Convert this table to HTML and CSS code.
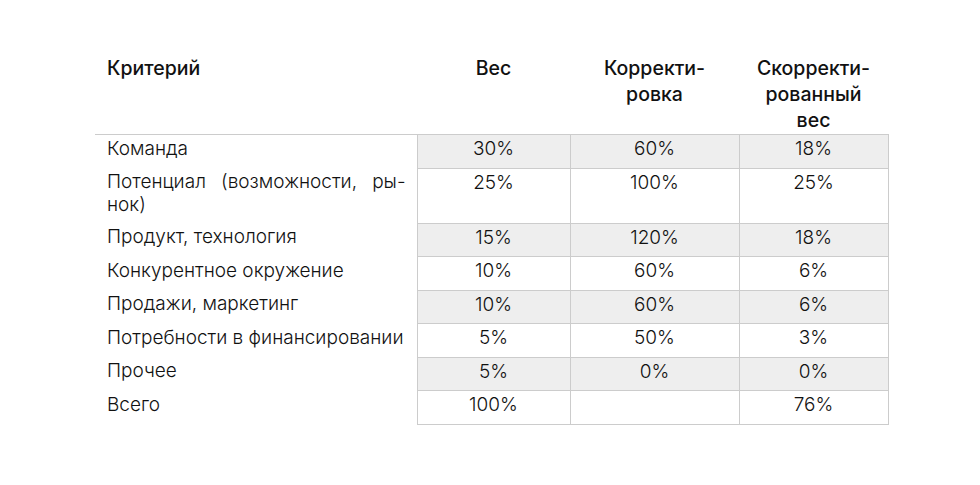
FILE: index.html
```html
<!DOCTYPE html>
<html lang="ru">
<head>
<meta charset="utf-8">
<link rel="stylesheet" href="styles.css">
</head>
<body>
<div class="page">
  <table class="weights">
    <colgroup>
      <col class="c1"><col class="c2"><col class="c3"><col class="c4">
    </colgroup>
    <thead>
      <tr>
        <th class="crit">Критерий</th>
        <th>Вес</th>
        <th>Корректи-<br>ровка</th>
        <th>Скорректи-<br>рованный<br>вес</th>
      </tr>
    </thead>
    <tbody>
      <tr class="shade"><td class="crit">Команда</td><td>30%</td><td>60%</td><td>18%</td></tr>
      <tr><td class="crit"><span class="just">Потенциал (возможности, ры-</span>нок)</td><td>25%</td><td>100%</td><td>25%</td></tr>
      <tr class="shade"><td class="crit">Продукт, технология</td><td>15%</td><td>120%</td><td>18%</td></tr>
      <tr><td class="crit">Конкурентное окружение</td><td>10%</td><td>60%</td><td>6%</td></tr>
      <tr class="shade"><td class="crit">Продажи, маркетинг</td><td>10%</td><td>60%</td><td>6%</td></tr>
      <tr><td class="crit">Потребности в финансировании</td><td>5%</td><td>50%</td><td>3%</td></tr>
      <tr class="shade"><td class="crit">Прочее</td><td>5%</td><td>0%</td><td>0%</td></tr>
      <tr><td class="crit">Всего</td><td>100%</td><td></td><td>76%</td></tr>
    </tbody>
  </table>
</div>
</body>
</html>
```
FILE: styles.css
```css
html, body {
  margin: 0;
  padding: 0;
  background: #ffffff;
}
.page {
  padding: 55px 0 0 95px;
  font-family: "Inter", "Liberation Sans", sans-serif;
  color: #111111;
}
.weights {
  border-collapse: collapse;
  table-layout: fixed;
  width: 793px;
}
.c1 { width: 322px; }
.c2 { width: 153px; }
.c3 { width: 169px; }
.c4 { width: 149px; }
.weights th {
  font-size: 19.5px;
  font-weight: 500;
  line-height: 26px;
  text-align: center;
  vertical-align: top;
  padding: 0 0 1px 0;
  border-bottom: 1px solid #cccccc;
}
.weights th.crit {
  text-align: left;
  padding-left: 12px;
}
.weights td {
  font-size: 19px;
  font-weight: 300;
  line-height: 22.5px;
  text-align: center;
  vertical-align: top;
  padding: 3px 0 7px;
  border: 1px solid #cccccc;
}
.weights tr.shade td {
  background: #eeeeee;
}
.weights td.crit {
  text-align: left;
  padding: 3px 8px 7px 12px;
  border-left: none;
  border-top: none;
  border-bottom: none;
  background: #ffffff !important;
  white-space: nowrap;
}
.weights tbody tr:first-child td.crit {
  border-top: 1px solid #cccccc;
}
.just {
  display: block;
  white-space: normal;
  text-align: justify;
  text-align-last: justify;
  margin-right: 3px;
}
```
